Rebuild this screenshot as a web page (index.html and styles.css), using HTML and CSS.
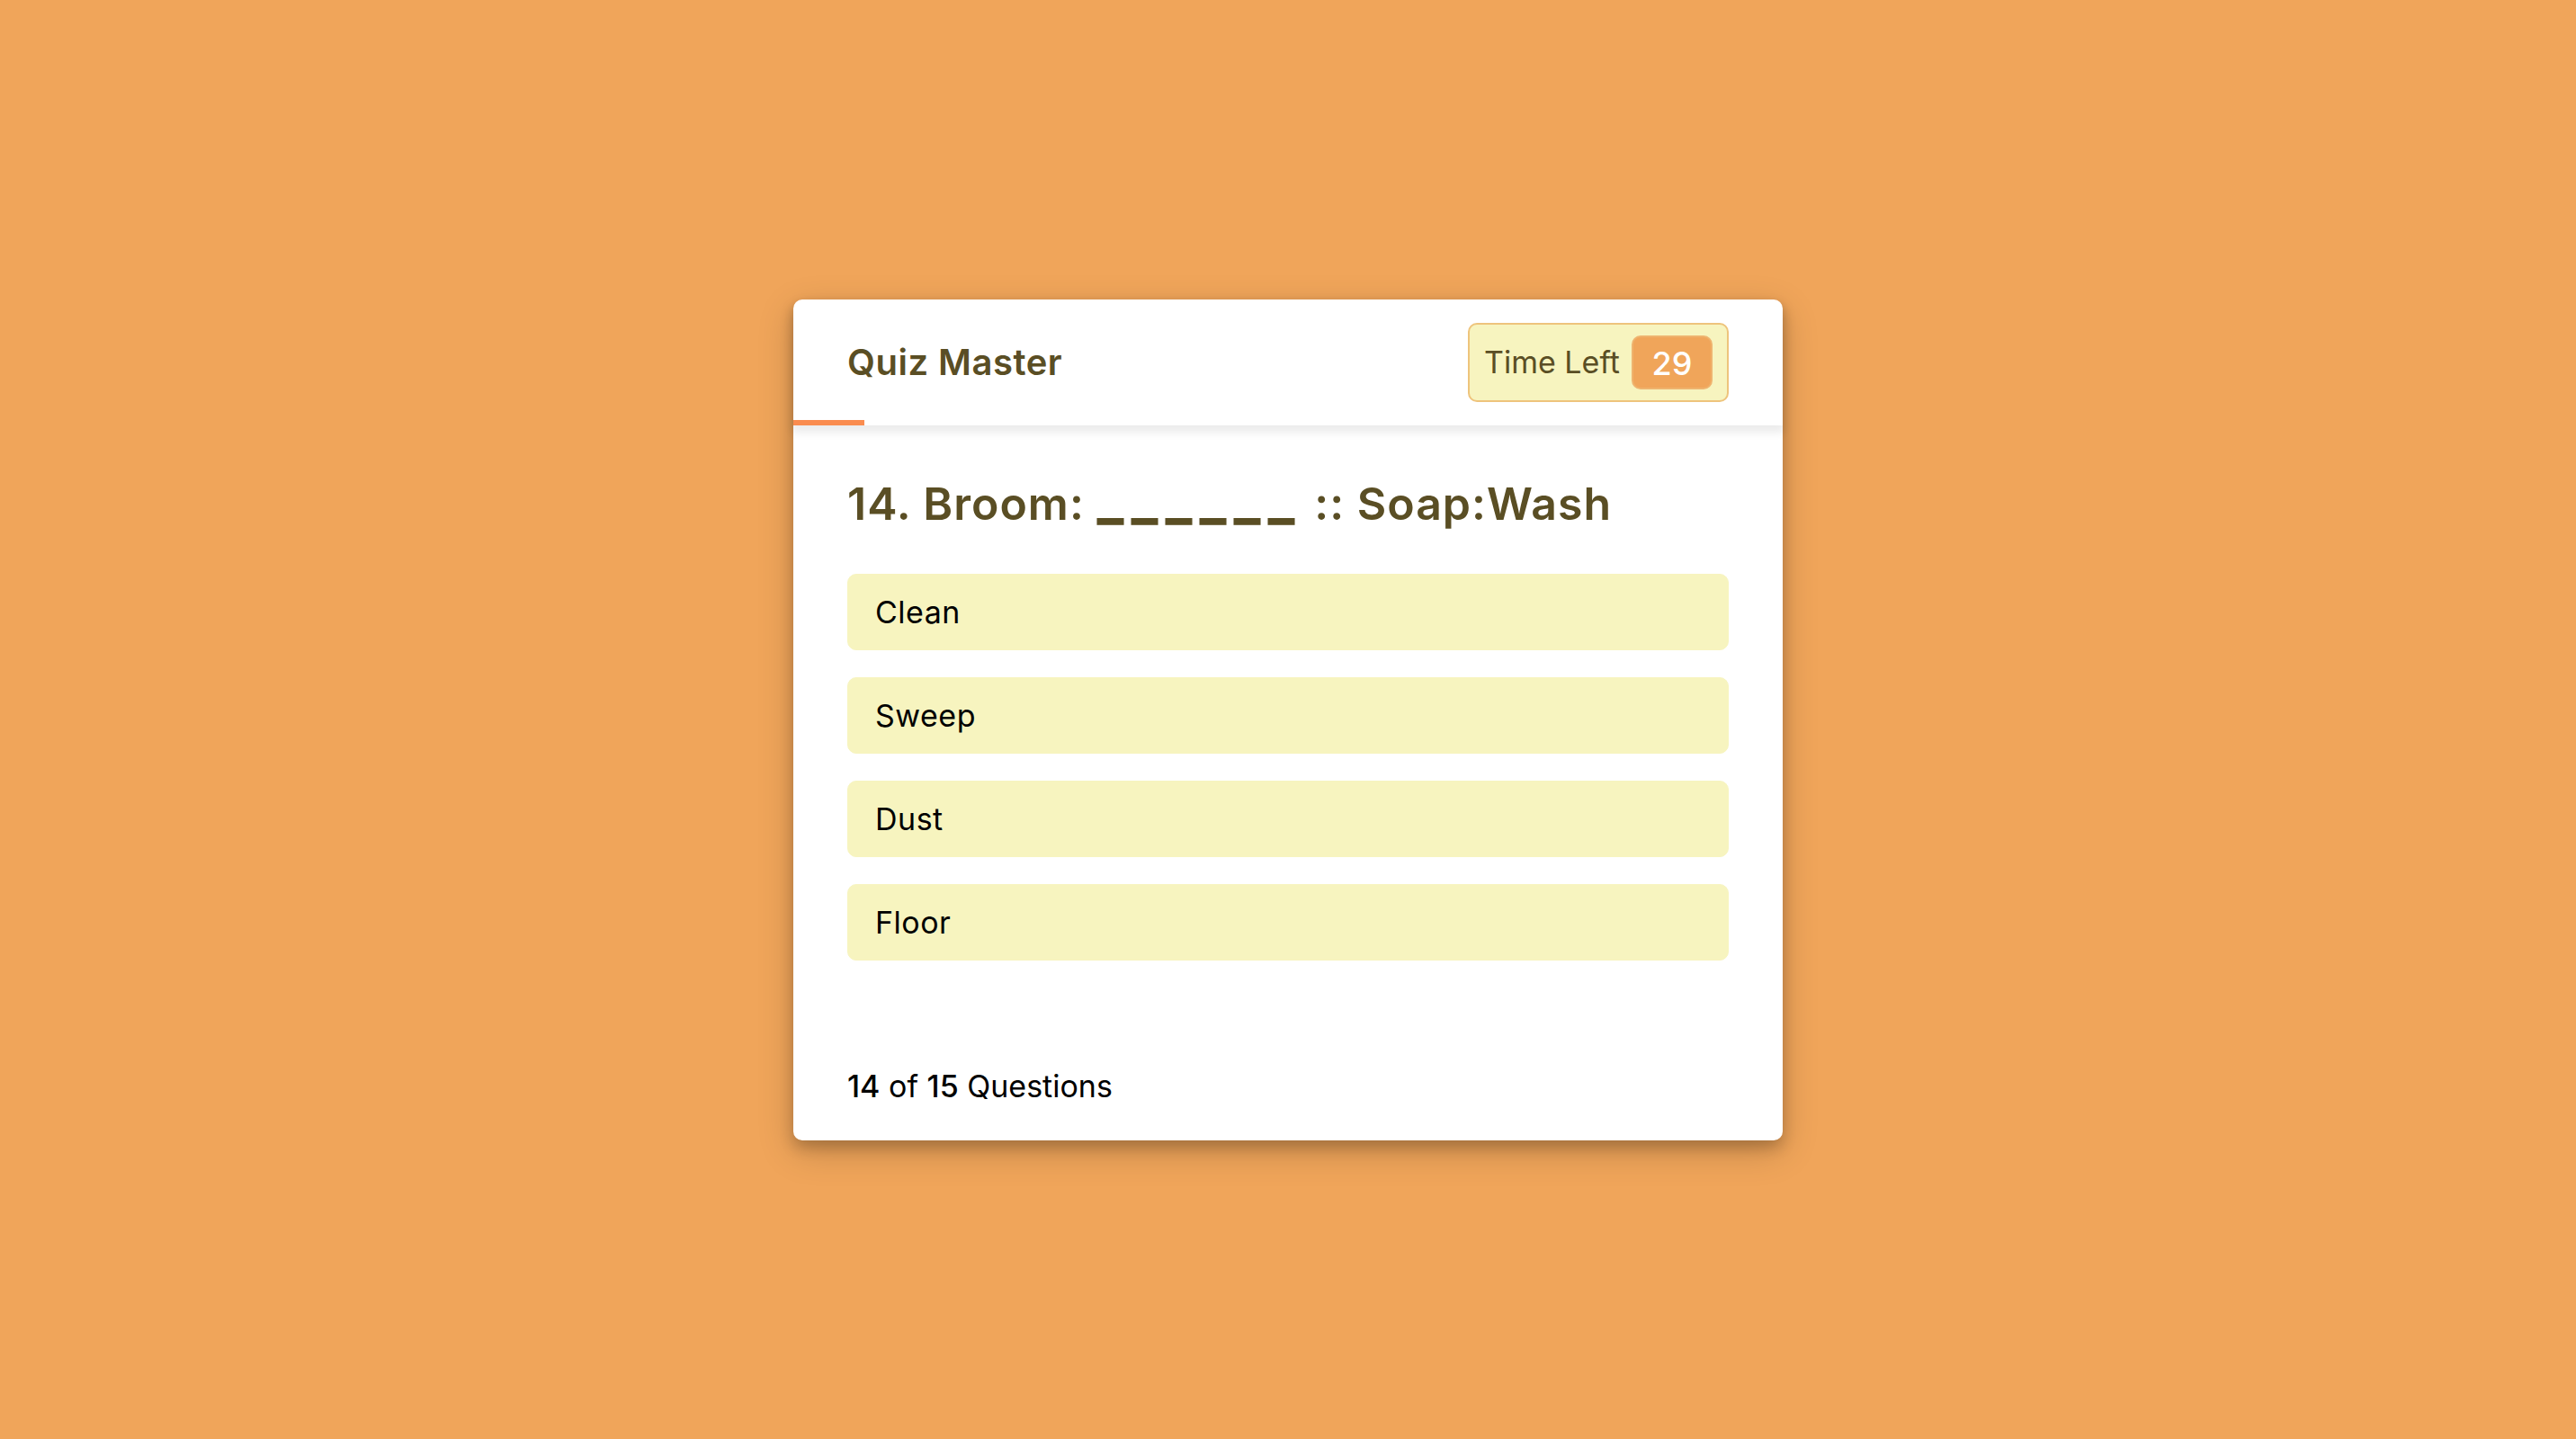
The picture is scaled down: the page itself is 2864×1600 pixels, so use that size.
FILE: index.html
```html
<!DOCTYPE html>
<html lang="en">
<head>
<meta charset="utf-8">
<title>Quiz Master</title>
<link rel="stylesheet" href="styles.css">
</head>
<body>
<div class="quiz-box">
  <header class="quiz-header">
    <div class="title">Quiz Master</div>
    <div class="timer">
      <span class="time-left-txt">Time Left</span>
      <span class="timer-sec">29</span>
    </div>
    <div class="time-line"></div>
  </header>
  <section class="quiz-body">
    <div class="que-text">14. Broom: <span class="blank">______</span> :: Soap:Wash</div>
    <div class="option-list">
      <div class="option">Clean</div>
      <div class="option">Sweep</div>
      <div class="option">Dust</div>
      <div class="option">Floor</div>
    </div>
  </section>
  <footer class="quiz-footer">
    <div class="total-que"><b class="num">14</b> of <b class="num">15</b> Questions</div>
  </footer>
</div>
</body>
</html>
```
FILE: styles.css
```css
* {
  box-sizing: border-box;
  margin: 0;
  padding: 0;
}
html, body {
  height: 100%;
}
body {
  background: #f0a55a;
  font-family: "Inter", "Noto Sans", sans-serif;
  display: flex;
  align-items: center;
  justify-content: center;
}
.quiz-box {
  width: 1100px;
  height: 935px;
  background: #fff;
  border-radius: 10px;
  display: flex;
  flex-direction: column;
  box-shadow: 0 8px 16px rgba(0, 0, 0, 0.2), 0 12px 40px rgba(0, 0, 0, 0.19);
}
.quiz-header {
  position: relative;
  height: 140px;
  padding: 0 60px;
  display: flex;
  align-items: center;
  justify-content: space-between;
  border-radius: 10px 10px 0 0;
  box-shadow: 0 6px 10px 2px rgba(0, 0, 0, 0.08);
  z-index: 1;
}
.title {
  font-size: 40px;
  font-weight: 600;
  letter-spacing: 0.5px;
  color: #5a4e24;
}
.timer {
  width: 290px;
  height: 88px;
  padding: 0 16px;
  display: flex;
  align-items: center;
  justify-content: space-between;
  background: #f7f4bf;
  border: 2px solid #eec47c;
  border-radius: 10px;
  color: #5a4e24;
}
.time-left-txt {
  font-size: 34px;
  font-weight: 400;
}
.timer-sec {
  width: 90px;
  height: 60px;
  line-height: 58px;
  text-align: center;
  font-size: 36px;
  font-weight: 500;
  color: #fff;
  background: #f0a55a;
  border: 2px solid #efb36e;
  border-radius: 10px;
}
.time-line {
  position: absolute;
  left: 0;
  bottom: 0;
  width: 79px;
  height: 6px;
  background: #fa8c4f;
}
.quiz-body {
  flex: 1;
  padding: 50px 60px 0;
}
.que-text {
  font-size: 50px;
  font-weight: 600;
  line-height: 75px;
  letter-spacing: 1px;
  color: #5a4e24;
}
.blank {
  font-size: 62px;
  font-weight: 800;
  letter-spacing: 8px;
  line-height: 0;
  vertical-align: 2px;
}
.option-list {
  padding-top: 40px;
  display: flex;
  flex-direction: column;
  gap: 30px;
}
.option {
  background: #f7f4bf;
  border: 1px solid #f7f4bf;
  border-radius: 10px;
  padding: 16px 30px;
  font-size: 34px;
  line-height: 51px;
  letter-spacing: 0.5px;
  color: #000;
}
.quiz-footer {
  height: 120px;
  padding: 0 60px;
  display: flex;
  align-items: center;
}
.total-que {
  font-size: 34px;
  color: #000;
}
.num {
  font-weight: 500;
}
```
